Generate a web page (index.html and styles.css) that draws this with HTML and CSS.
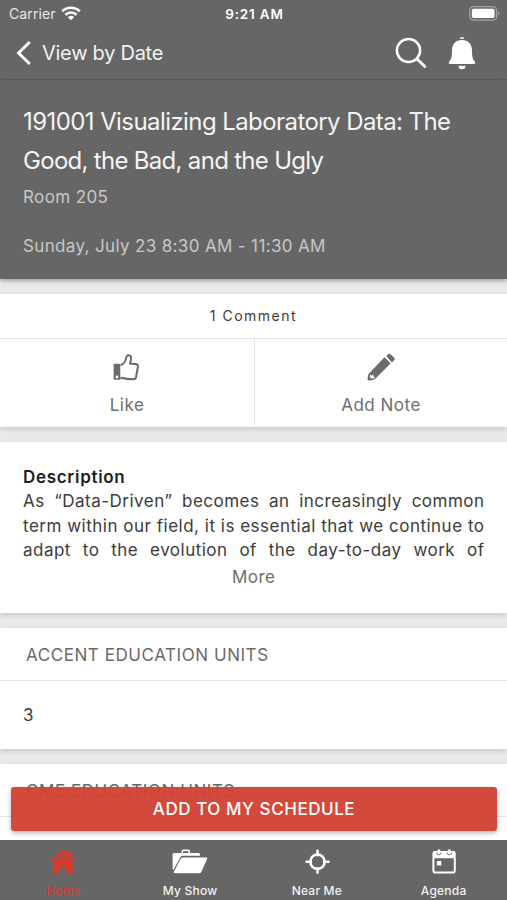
FILE: index.html
```html
<!DOCTYPE html>
<html lang="en">
<head>
<meta charset="utf-8">
<title>Session</title>
<link rel="stylesheet" href="styles.css">
</head>
<body>
<div class="app">
  <header class="top">
    <div class="status">
      <div class="carrier"><span>Carrier</span>
        <svg width="20" height="15" viewBox="0 0 20 15" fill="none" stroke="#fff" stroke-width="2.7"><path d="M1.2 5.3a12.7 12.7 0 0 1 17.6 0M4.5 8.7a8 8 0 0 1 11 0"/><path d="M10 14.3L6.9 11.2a4.5 4.5 0 0 1 6.2 0z" fill="#fff" stroke="none"/></svg>
      </div>
      <div class="time">9:21 AM</div>
      <div class="battery">
        <svg width="32" height="15" viewBox="0 0 32 15"><rect x=".7" y=".7" width="27" height="13.4" rx="3.8" fill="none" stroke="#a5a5a5" stroke-width="1.2"/><rect x="2.8" y="2.7" width="22.8" height="9.4" rx="1.8" fill="#fff"/><path d="M29.3 4.8q2.3 2.4 0 5z" fill="#a5a5a5"/></svg>
      </div>
    </div>
    <nav class="nav">
      <svg class="back" width="16" height="26" viewBox="0 0 16 26" fill="none" stroke="#fff" stroke-width="3"><path d="M13.8 2L2.6 13l11.2 11"/></svg>
      <span class="nav-title">View by Date</span>
      <svg class="search" width="32" height="32" viewBox="0 0 32 32" fill="none" stroke="#fff" stroke-width="2.5" stroke-linecap="round"><circle cx="13.5" cy="13.5" r="11.6"/><path d="M22 22l7.800 7.500" stroke-width="3"/></svg>
      <svg class="bell" width="28" height="34" viewBox="0 0 28 34" fill="#fff"><path d="M11.500 2.800a2.600 2.600 0 0 1 5 0zM14 4c6 0 10 4 10 10.500 0 6 .6 9 3 11.300q.9 2.200-1 2.200H2q-1.900 0-1-2.200c2.400-2.300 3-5.300 3-11.300C4 8 8 4 14 4zM10.500 29.800h7a3.500 3.500 0 0 1-7 0z"/></svg>
    </nav>
  </header>
  <section class="hero">
    <h1><span class="l1">191001 Visualizing Laboratory Data: The</span><br><span class="l2">Good, the Bad, and the Ugly</span></h1>
    <p class="room">Room 205</p>
    <p class="when">Sunday, July 23 8:30 AM - 11:30 AM</p>
  </section>
  <main class="content">
    <section class="card">
      <div class="comments">1 Comment</div>
      <div class="actions">
        <div class="action">
          <svg width="28" height="28" viewBox="0 0 28 28" fill="none" stroke="#6b6b6b" stroke-width="2" stroke-linejoin="round"><path d="M7.500 12c3.500-.6 5.500-4.800 5.900-7.800.4-3 4.600-2.500 4.600.9 0 2.200-.7 3.800-1 5.600 2.500-.1 5.600 0 7.300.8 1.200.8.700 2.500.2 4.500l-1.300 7.500c-.4 2-1.200 2.700-2.800 2.700-5 0-8.500-.500-12.900-1.500"/><path d="M.6 10.800h6.700v16H1.300q-.7 0-.7-.7z" fill="#6b6b6b" stroke="none"/><circle cx="4" cy="24" r="1.400" fill="#fff" stroke="none"/></svg>
          <span class="like">Like</span>
        </div>
        <div class="action">
          <svg width="28" height="28" viewBox="0 0 28 28" fill="#6b6b6b"><path d="M17 4.800Q17.600 4.200 18.200 4.800L23 9.700q.5.600 0 1.200L8 26q-1 1-6.500 1.500-1 0-.9-1 .1-4 .9-5.500z"/><path d="M19.200 3l1.900-1.700q1.200-1 2.500.1L27 4.600q1.200 1.300.1 2.600l-2.200 2.300z"/><path d="M3.200 21.500l1.300 1.200 1.700-1.200.4 2 1.500.9-2.300 1.300-2-.4-1-1.500z" fill="#fff"/></svg>
          <span class="note">Add Note</span>
        </div>
      </div>
    </section>
    <section class="card desc">
      <h2>Description</h2>
      <p class="row">As “Data-Driven” becomes an increasingly common</p>
      <p class="row">term within our field, it is essential that we continue to</p>
      <p class="row">adapt to the evolution of the day-to-day work of</p>
      <div class="more">More</div>
    </section>
    <section class="card">
      <div class="label"><span class="accent">ACCENT EDUCATION UNITS</span></div>
      <div class="value">3</div>
    </section>
    <section class="card last">
      <div class="label"><span class="cme">CME EDUCATION UNITS</span></div>
      <div class="value"></div>
    </section>
  </main>
  <button class="schedule"><span>ADD TO MY SCHEDULE</span></button>
  <footer class="tabs">
    <div class="tab home">
      <svg width="28" height="26" viewBox="0 0 28 26" fill="#dc3b2b"><path d="M14 .5l5 4V2.800h3.800v4.800l3.900 3.600-1.600 2.300L14 4.300 2.900 13.500l-1.600-2.300z"/><path d="M14 6.200l9.700 8.200V24.500h-6.500v-6.700h-6.400v6.700H4.300V14.400z"/></svg>
      <span>Home</span>
    </div>
    <div class="tab">
      <svg width="36" height="26" viewBox="0 0 36 26" fill="#fff"><path d="M.6 20V5.500Q.6 4 2 4h7.500V2.500Q9.500.5 11.500.5H16q2 0 2 2V4h8.500q1.500 0 1.500 1.500v1.200H10.500q-1.500 0-2.200 1.500L1.500 21z"/><path d="M11 2.200h5.500V4H11z" fill="#666"/><path d="M10.700 8.500h23.500q1.500 0 .9 1.400l-5.700 12.900q-.7 1.500-2.200 1.500H2.500q-1.300 0-.7-1.400L8.400 10q.7-1.500 2.300-1.500z"/></svg>
      <span class="show">My Show</span>
    </div>
    <div class="tab">
      <svg width="26" height="26" viewBox="0 0 26 26" fill="none" stroke="#fff" stroke-width="2.500" stroke-linecap="round"><circle cx="13.500" cy="12.800" r="7.200"/><path d="M13.500 1.800v4.500M13.500 19.300v4.500M2.500 12.800H7M20 12.800h4.500"/></svg>
      <span class="near">Near Me</span>
    </div>
    <div class="tab">
      <svg width="26" height="26" viewBox="0 0 26 26"><rect x="2.400" y="3" width="21.400" height="20.600" rx="2.200" fill="none" stroke="#fff" stroke-width="2"/><path d="M2 2.500h22v6.700H2zM5.800 12h4.500v4.500H5.800z" fill="#fff"/><path d="M5.600 3.500a2.300 2.300 0 0 0 4.600 0M16.200 3.500a2.300 2.300 0 0 0 4.600 0" fill="none" stroke="#777" stroke-width="1"/><path d="M7.900 .5v4M18.500 .5v4" stroke="#fff" stroke-width="2.400"/></svg>
      <span class="agenda">Agenda</span>
    </div>
  </footer>
</div>
</body>
</html>
```
FILE: styles.css
```css
* { box-sizing: border-box; }
body { margin: 0; font-family: Inter, "Liberation Sans", sans-serif; color: #3b3b3b; }
h1, h2, p { margin: 0; font-weight: 400; }
svg { display: block; flex: none; }
.app { height: 900px; overflow: hidden; background: #e9e9eb; display: flex; flex-direction: column; }
.top { flex: none; height: 80px; background: #666; color: #fff; border-bottom: 1px solid #5d5d5d; }
.status { height: 27px; display: grid; grid-template-columns: 1fr auto 1fr; align-items: center; padding: 0 6px 0 9px; font-size: 14px; }
.carrier { display: flex; align-items: center; gap: 6px; }
.carrier span { color: #e8e8e8; letter-spacing: .1px; }
.carrier svg { margin-top: -1px; margin-left: -1px; }
.time { font-weight: 600; font-size: 13.500px; letter-spacing: .8px; margin-left: -1px; }
.battery { display: flex; justify-content: flex-end; }
.nav { height: 52px; display: flex; align-items: center; padding: 0 31px 0 16px; }
.nav-title { font-size: 20px; letter-spacing: -.27px; margin-left: 10px; flex: 1; color: #f2f2f2; }
.search { margin-right: 21px; }
.hero { flex: none; height: 199px; padding: 22px 23px 0; background: #666; position: relative; box-shadow: 0 2px 4px rgba(0,0,0,.3); color: #f4f4f4; }
h1 { font-size: 24px; line-height: 39px; white-space: nowrap; }
.l1 { letter-spacing: -.58px; }
.l2 { letter-spacing: -.7px; }
.room, .when { font-size: 17px; line-height: 24px; color: #c8c8c8; }
.room { margin-top: 5px; letter-spacing: .38px; }
.when { margin-top: 25px; letter-spacing: .35px; }
.content { flex: 1; min-height: 0; padding-top: 15px; display: flex; flex-direction: column; gap: 15px; }
.card { flex: none; background: #fff; box-shadow: 0 2px 5px rgba(0,0,0,.14); }
.comments { height: 45px; border-bottom: 1px solid #e4e4e4; text-align: center; font-size: 14px; line-height: 44px; letter-spacing: 1.500px; }
.actions { height: 88px; display: grid; grid-template-columns: 255px 1fr; }
.action { display: flex; flex-direction: column; align-items: center; padding-top: 14px; font-size: 17px; line-height: 24px; color: #6e6e6e; letter-spacing: .5px; gap: 12px; }
.action:first-child { border-right: 1px solid #e4e4e4; }
.desc { height: 171px; padding: 23px 22.500px 0 23px; font-size: 17px; line-height: 24.300px; letter-spacing: .49px; }
h2 { font-size: 17px; line-height: 24.300px; font-weight: 600; color: #1d1d1d; letter-spacing: .7px; }
.row { white-space: nowrap; text-align: justify; text-align-last: justify; }
.more { text-align: center; color: #6e6e6e; margin-top: 3px; }
.label { height: 53px; border-bottom: 1px solid #e4e4e4; padding-left: 26px; font-size: 17px; line-height: 54px; color: #6a6a6a; letter-spacing: .56px; }
.value { height: 68px; padding-left: 23px; font-size: 17px; line-height: 69px; }
.schedule { position: absolute; left: 11px; top: 786.500px; width: 486px; height: 44px; border: 0; border-radius: 3px; background: rgba(209,67,53,.96); color: #fff; font: 500 17px Inter, sans-serif; letter-spacing: .56px; box-shadow: 0 2px 5px rgba(0,0,0,.3); padding: 0; }
.tabs { position: relative; flex: none; height: 60px; background: #666; display: grid; grid-template-columns: repeat(4, 1fr); color: #f2f2f2; font-size: 12px; font-weight: 500; }
.tab { display: flex; flex-direction: column; align-items: center; padding-top: 9px; gap: 8px; line-height: 15px; letter-spacing: .2px; }
.home { color: #dc3b2b; font-weight: 400; }
```
